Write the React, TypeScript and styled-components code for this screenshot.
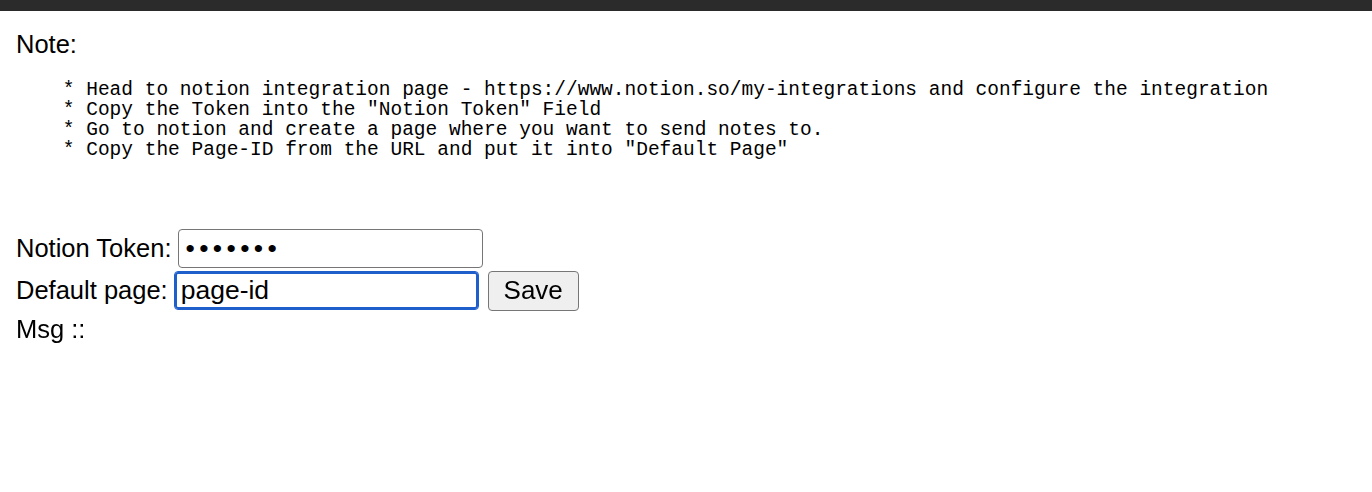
import React, { useEffect, useRef, useState } from "react";
import styled, { createGlobalStyle } from "styled-components";

const GlobalStyle = createGlobalStyle`
  html, body {
    margin: 0;
    padding: 0;
    background: #ffffff;
  }
  body {
    font-family: "Liberation Sans", Arial, sans-serif;
    color: #000000;
  }
`;

const TopBar = styled.div`
  height: 11px;
  background: #2b2b2b;
`;

const Content = styled.main`
  padding: 19px 16px 0 16px;
  font-family: "Liberation Sans", Arial, sans-serif;
  font-size: 25.5px;
`;

const NoteTitle = styled.div`
  line-height: 28.7px;
`;

const Instructions = styled.pre`
  margin: 21px 0 0 0;
  font-family: "Liberation Mono", "Courier New", monospace;
  font-size: 19.5px;
  line-height: 20px;
  white-space: pre;
`;

const Form = styled.form`
  margin-top: 69px;
  display: flex;
  flex-direction: column;
  gap: 2px;
`;

const Row = styled.div`
  display: flex;
  align-items: center;
  height: 40px;
`;

const Label = styled.label<{ $gap: number }>`
  line-height: 28.7px;
  margin-right: ${(p) => p.$gap}px;
  white-space: nowrap;
`;

const TextInput = styled.input`
  box-sizing: border-box;
  width: 305px;
  height: 39px;
  padding: 0 6px;
  font-family: "Liberation Sans", Arial, sans-serif;
  font-size: 26.5px;
  color: #000;
  background: #fff;
  border: 1px solid #767676;
  border-radius: 4px;
  outline: none;
  caret-color: #000;
  &[type="password"] {
    padding-left: 6px;
    letter-spacing: 4.4px;
  }
  &:focus {
    border-color: #1f5fcb;
    box-shadow: inset 0 0 0 2px #1f5fcb;
  }
`;

const SaveButton = styled.button`
  box-sizing: border-box;
  margin-left: 9px;
  width: 91px;
  height: 40px;
  padding: 0;
  font-family: "Liberation Sans", Arial, sans-serif;
  font-size: 26px;
  color: #000;
  background: #efefef;
  border: 1px solid #767676;
  border-radius: 4px;
`;

const Msg = styled.div`
  line-height: 28.7px;
  margin-top: 4px;
`;

const lines = [
  "    * Head to notion integration page - https://www.notion.so/my-integrations and configure the integration",
  "    * Copy the Token into the \"Notion Token\" Field",
  "    * Go to notion and create a page where you want to send notes to.",
  "    * Copy the Page-ID from the URL and put it into \"Default Page\"",
];

export default function App() {
  const [token, setToken] = useState("1234567");
  const [page, setPage] = useState("page-id");
  const pageRef = useRef<HTMLInputElement>(null);

  useEffect(() => {
    const el = pageRef.current;
    if (el) {
      el.focus();
      el.setSelectionRange(el.value.length, el.value.length);
    }
  }, []);

  return (
    <>
      <GlobalStyle />
      <TopBar />
      <Content>
        <NoteTitle>Note:</NoteTitle>
        <Instructions>{lines.join("\n")}</Instructions>
        <Form onSubmit={(e) => e.preventDefault()}>
          <Row>
            <Label $gap={7}>Notion Token:</Label>
            <TextInput
              type="password"
              value={token}
              onChange={(e) => setToken(e.target.value)}
            />
          </Row>
          <Row>
            <Label $gap={6}>Default page:</Label>
            <TextInput
              ref={pageRef}
              type="text"
              value={page}
              onChange={(e) => setPage(e.target.value)}
            />
            <SaveButton type="submit">Save</SaveButton>
          </Row>
        </Form>
        <Msg>Msg ::</Msg>
      </Content>
    </>
  );
}
